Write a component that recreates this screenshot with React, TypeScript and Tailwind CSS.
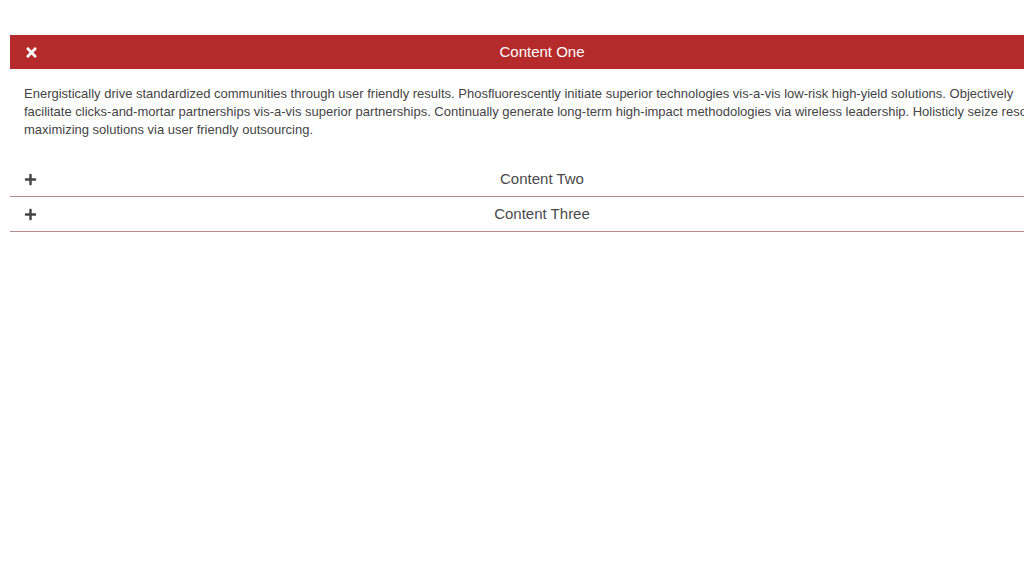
import React from "react";
import { FaPlus, FaTimes } from "react-icons/fa";

function Row({ icon, title, className }: { icon: React.ReactNode; title: string; className: string }) {
  return (
    <div className={`grid grid-cols-[40px_1fr_40px] items-center px-[14px] text-[15px] ${className}`}>
      <span className="flex items-center">{icon}</span>
      <span className="text-center">{title}</span>
      <span />
    </div>
  );
}

export default function App() {
  const font = { fontFamily: '"Liberation Sans", Arial, sans-serif' };
  return (
    <div className="w-screen h-[576px] overflow-hidden bg-white" style={font}>
      <div className="w-[1064px] ml-[10px] pt-[35px]">
        <Row
          icon={<FaTimes className="text-[15px]" />}
          title="Content One"
          className="h-[34px] bg-[#b52a2a] text-white"
        />
        <div className="px-[14px] pt-[16px] pb-[23px] text-[13px] leading-[18px] text-[#444]">
          Energistically drive standardized communities through user friendly results. Phosfluorescently initiate superior technologies vis-a-vis low-risk high-yield solutions. Objectively facilitate clicks-and-mortar partnerships vis-a-vis superior partnerships. Continually generate long-term high-impact methodologies via wireless leadership. Holisticly seize resources maximizing solutions via user friendly outsourcing.
        </div>
        <Row
          icon={<FaPlus className="text-[13px] text-[#444]" />}
          title="Content Two"
          className="h-[35px] border-b border-[#b88a8a] text-[#4a4a4a]"
        />
        <Row
          icon={<FaPlus className="text-[13px] text-[#444]" />}
          title="Content Three"
          className="h-[35px] border-b border-[#b88a8a] text-[#4a4a4a]"
        />
      </div>
    </div>
  );
}
